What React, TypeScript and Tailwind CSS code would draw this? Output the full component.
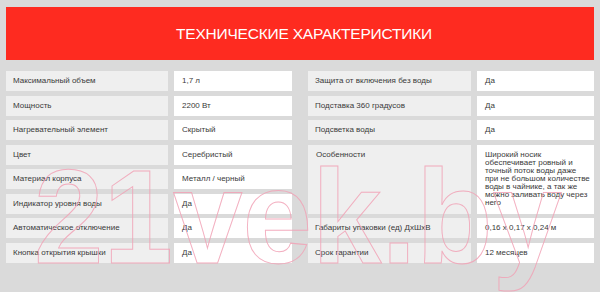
import React from "react";

const left: [string, string][] = [
  ["Максимальный объем", "1,7 л"],
  ["Мощность", "2200 Вт"],
  ["Нагревательный элемент", "Скрытый"],
  ["Цвет", "Серебристый"],
  ["Материал корпуса", "Металл / черный"],
  ["Индикатор уровня воды", "Да"],
  ["Автоматическое отключение", "Да"],
  ["Кнопка открытия крышки", "Да"],
];

const rightTop: [string, string][] = [
  ["Защита от включения без воды", "Да"],
  ["Подставка 360 градусов", "Да"],
  ["Подсветка воды", "Да"],
];

const rightBottom: [string, string][] = [
  ["Габариты упаковки (ед) ДхШхВ", "0,16 x 0,17 x 0,24 м"],
  ["Срок гарантии", "12 месяцев"],
];

const features = [
  "Широкий носик",
  "обеспечивает ровный и",
  "точный поток воды даже",
  "при не большом количестве",
  "воды в чайнике, а так же",
  "можно заливать воду через",
  "него",
];

function Row({ k, v }: { k: string; v: string }) {
  return (
    <>
      <div className="bg-[#efefef] flex items-center pl-[7px] whitespace-nowrap">{k}</div>
      <div className="bg-white flex items-center pl-[8px] whitespace-nowrap">{v}</div>
    </>
  );
}

export default function App() {
  return (
    <div className="relative w-[600px] h-[292px] overflow-hidden bg-[#dadada] pt-[7px] px-[6px] font-['Liberation_Sans',Arial,sans-serif]">
      <div className="h-[53px] bg-[#fe2b20] flex items-center justify-center text-white text-[15.5px] pl-[8px] tracking-[-0.2px]">
        ТЕХНИЧЕСКИЕ ХАРАКТЕРИСТИКИ
      </div>
      <div className="mt-[11px] flex gap-[16px] text-[8px] text-[#3a3a3a] leading-[8.1px]">
        <div className="grid grid-cols-[162px_118px] gap-x-[6px] gap-y-[4.57px] grid-rows-[repeat(8,20px)]">
          {left.map(([k, v]) => (
            <Row key={k} k={k} v={v} />
          ))}
        </div>
        <div className="grid grid-cols-[163px_117px] gap-x-[6px] gap-y-[4.57px] grid-rows-[repeat(8,20px)]">
          {rightTop.map(([k, v]) => (
            <Row key={k} k={k} v={v} />
          ))}
          <div className="row-span-3 bg-[#efefef] pl-[8px] pt-[6px]">Особенности</div>
          <div className="row-span-3 bg-white pl-[8px] pt-[6px] whitespace-nowrap">
            {features.map((l) => (
              <div key={l}>{l}</div>
            ))}
          </div>
          {rightBottom.map(([k, v]) => (
            <Row key={k} k={k} v={v} />
          ))}
        </div>
      </div>
      <svg
        className="absolute left-0 top-0 pointer-events-none"
        width="600"
        height="292"
        viewBox="0 0 600 292"
        aria-hidden="true"
      >
        <text
          x="34"
          y="263"
          textLength="528"
          lengthAdjust="spacingAndGlyphs"
          fontFamily="'Liberation Sans', Arial, sans-serif"
          fontWeight="700"
          fontSize="134"
          fill="none"
          stroke="#f2a2b6"
          strokeWidth="1"
          opacity="0.85"
        >
          21vek.by
        </text>
      </svg>
    </div>
  );
}
